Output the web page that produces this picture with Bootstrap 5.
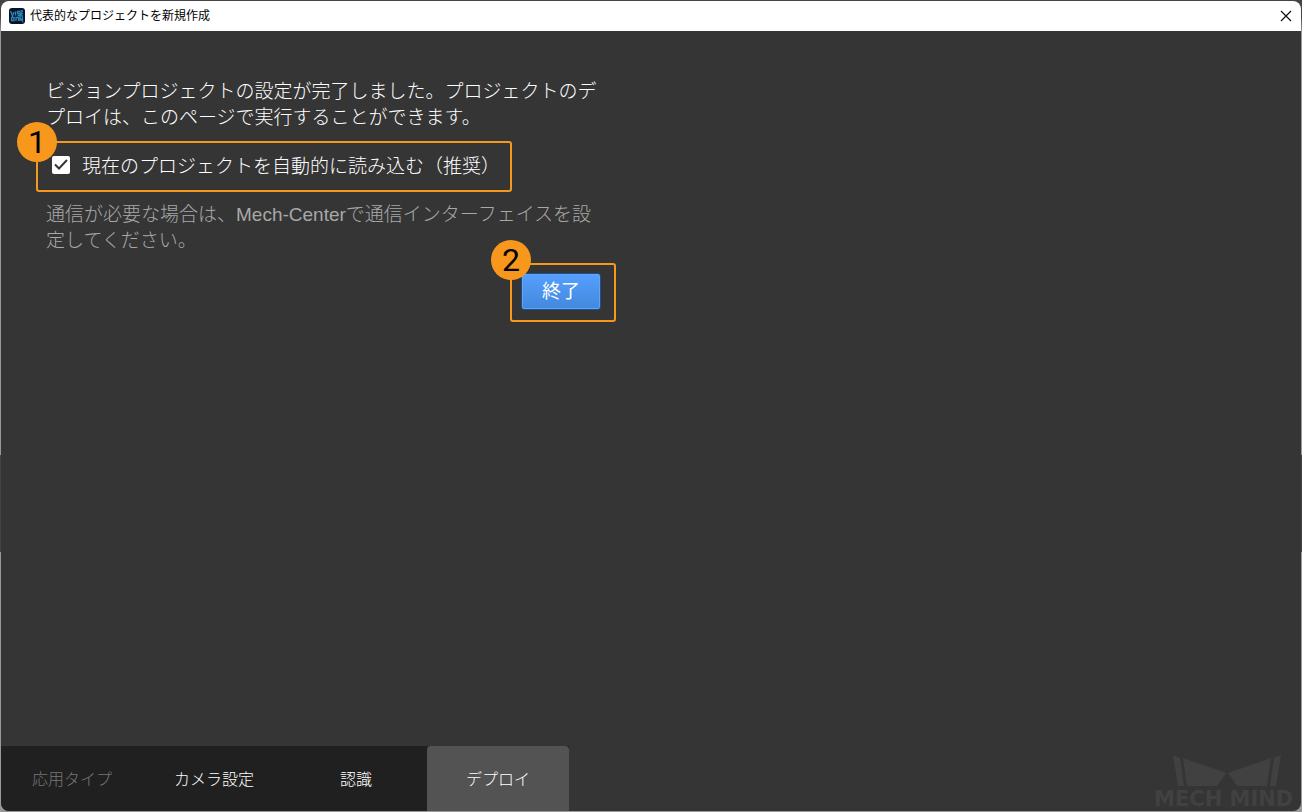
<!DOCTYPE html>
<html lang="ja">
<head>
<meta charset="utf-8">
<meta name="viewport" content="width=device-width, initial-scale=1">
<title>代表的なプロジェクトを新規作成</title>
<link href="https://cdn.jsdelivr.net/npm/bootstrap@5.3.0/dist/css/bootstrap.min.css" rel="stylesheet">
<style>
  body { font-family: "Liberation Sans", "Noto Sans CJK JP", sans-serif; background: linear-gradient(#444 2%, #999 4%, #999 56%, #444 56%, #444 68%, #999 68%); padding: 1px; }
  .app-window { background: #353535; border-radius: 8px; color: #fff; }
  .title-bar { height: 30px; background: #fff; color: #000; font-size: 12px; padding-left: 8px; gap: 5px; }
  .close-btn { width: 30px; height: 30px; color: #111; }
  .wizard-page { width: 615px; padding: 48px 0 0 45px; font-size: 19px; line-height: 26px; }
  .intro { width: 554px; }
  .note { width: 551px; color: #a8a8a8; }
  .callout-box { border: 2px solid #f7981d; border-radius: 3px; }
  .option-box { width: 476px; height: 51px; margin: 10px 0 10px -10px; padding-left: 14px; gap: 12px; }
  .finish-row { padding-top: 9px; }
  .finish-box { padding: 8px 13px 10px 9px; }
  .callout-num { width: 40px; height: 40px; top: -21px; left: -21px; border-radius: 50%; background: #f7981d; color: #000; font: 32px/40px Roboto, sans-serif; text-align: center; }
  .finish-box .callout-num { top: -25px; }
  .form-check-input.load-check { width: 18px; height: 18px; margin: 0 0 3px; border: 0; border-radius: 2px; background-color: #fff; box-shadow: none; }
  .load-check:checked { background-size: 18px; background-image: url("data:image/svg+xml,%3Csvg xmlns='http://www.w3.org/2000/svg' viewBox='0 0 18 18'%3E%3Cpath fill='none' stroke='%23353535' stroke-width='2' d='M3 8.5l4 4 8-8.5'/%3E%3C/svg%3E"); }
  .finish-btn { width: 80px; height: 37px; padding: 0; border: 1px solid #1d4f8f; border-radius: 3px; background: linear-gradient(#559fff, #4388dc); box-shadow: inset 0 0 0 1px #62a5f8; color: #fff; font-size: 19px; line-height: 36px; }
  .light-text { font-weight: 300; }
  .steps { background: #202020; font-size: 16px; }
  .step-link { width: 142px; height: 65px; padding-top: 2px; color: #fff; text-decoration: none; }
  .step-link.done { color: #777; }
  .step-link.current { background: #535353; border-radius: 4px 4px 0 0; }
  .brand-mark { width: 147px; height: 56px; }
</style>
</head>
<body class="vh-100">
<div class="app-window h-100 d-flex flex-column overflow-hidden">
  <header class="title-bar d-flex align-items-center">
    <svg width="16" height="16" viewBox="0 0 16 16" aria-hidden="true">
      <rect width="16" height="16" rx="3" fill="#06152a"/>
      <path d="M1.500 3l2 5 1.500-4M6.500 3.500v4M11 3.500H8.500v2H11v2H8.500M14 3h-2v5h2M12 5.500h2M2.500 9.500v3h2.500v-3zM7 13V9.500h2.500V13M11 13V9.500l2.500 3.500V9" fill="none" stroke="#2e86b8" stroke-width="1.3"/>
    </svg>
    <span>代表的なプロジェクトを新規作成</span>
    <button type="button" class="close-btn btn p-0 border-0 rounded-0 ms-auto d-flex align-items-center justify-content-center" aria-label="閉じる">
      <svg width="12" height="12" viewBox="0 0 12 12"><path d="M1 1l10 10M11 1L1 11" stroke="currentColor" stroke-width="1.200"/></svg>
    </button>
  </header>
  <main class="flex-grow-1">
    <div class="wizard-page light-text">
      <p class="intro mb-0">ビジョンプロジェクトの設定が完了しました。プロジェクトのデプロイは、このページで実行することができます。</p>
      <div class="callout-box option-box position-relative d-flex align-items-center">
        <span class="callout-num position-absolute">1</span>
        <input class="form-check-input load-check" type="checkbox" id="autoload" checked>
        <label for="autoload">現在のプロジェクトを自動的に読み込む（推奨）</label>
      </div>
      <p class="note mb-0">通信が必要な場合は、Mech-Centerで通信インターフェイスを設定してください。</p>
      <div class="finish-row d-flex justify-content-end">
        <div class="callout-box finish-box position-relative">
          <button type="button" class="finish-btn btn d-block">終了</button>
          <span class="callout-num position-absolute">2</span>
        </div>
      </div>
    </div>
  </main>
  <footer class="d-flex align-items-end justify-content-between">
    <nav class="steps light-text d-flex" aria-label="手順">
      <a href="#type" class="step-link done d-flex align-items-center justify-content-center">応用タイプ</a>
      <a href="#camera" class="step-link d-flex align-items-center justify-content-center">カメラ設定</a>
      <a href="#recognition" class="step-link d-flex align-items-center justify-content-center">認識</a>
      <a href="#deploy" class="step-link current d-flex align-items-center justify-content-center" aria-current="step">デプロイ</a>
    </nav>
    <svg class="brand-mark overflow-visible" viewBox="0 0 147 56" role="img" aria-label="MECH MIND">
      <g fill="#414141">
        <path d="M19 0l7 3 4 28h-6zM29 3l43 15-9 13H33zM127 0l-7 3-4 28h6zM117 3L74 18l9 13h30z"/>
        <text x="0" y="51" font-family="DejaVu Sans, sans-serif" font-weight="700" font-size="21">MECH MIND</text>
      </g>
    </svg>
  </footer>
</div>
<script src="https://cdn.jsdelivr.net/npm/bootstrap@5.3.0/dist/js/bootstrap.bundle.min.js"></script>
</body>
</html>
